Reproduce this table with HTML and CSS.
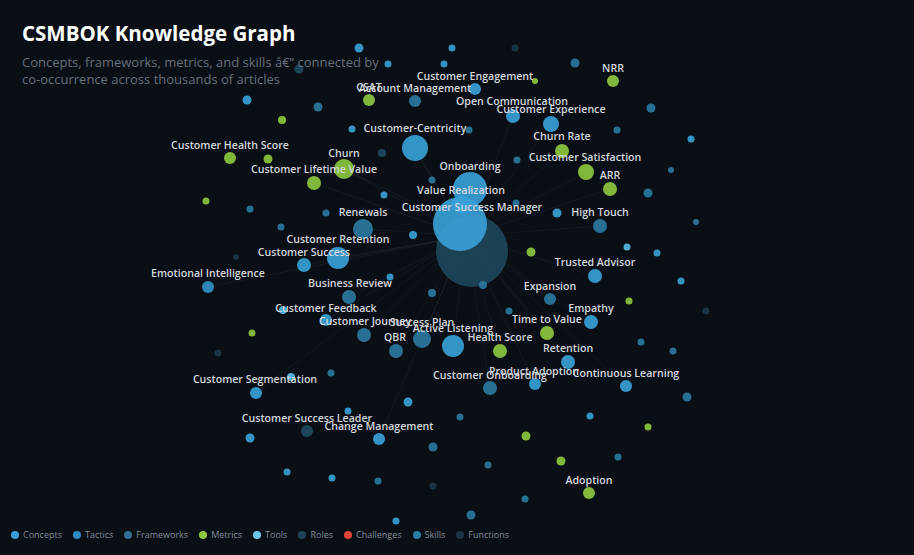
FILE: index.html
```html
<!DOCTYPE html>
<html lang="en">
<head>
<meta charset="utf-8">
<title>CSMBOK Knowledge Graph</title>
<link rel="stylesheet" href="styles.css">
</head>
<body>
<div class="page">
  <svg class="graph" width="914" height="555" viewBox="0 0 914 555" xmlns="http://www.w3.org/2000/svg">
    <g class="edges">
      <line x1="466" y1="236" x2="415" y2="149"/>
      <line x1="466" y1="236" x2="469" y2="189"/>
      <line x1="466" y1="236" x2="363" y2="229"/>
      <line x1="466" y1="236" x2="338" y2="258"/>
      <line x1="466" y1="236" x2="304" y2="265"/>
      <line x1="466" y1="236" x2="349" y2="297"/>
      <line x1="466" y1="236" x2="364" y2="335"/>
      <line x1="466" y1="236" x2="422" y2="339"/>
      <line x1="466" y1="236" x2="453" y2="346"/>
      <line x1="466" y1="236" x2="396" y2="351"/>
      <line x1="466" y1="236" x2="500" y2="351"/>
      <line x1="466" y1="236" x2="547" y2="333"/>
      <line x1="466" y1="236" x2="568" y2="362"/>
      <line x1="466" y1="236" x2="535" y2="384"/>
      <line x1="466" y1="236" x2="490" y2="388"/>
      <line x1="466" y1="236" x2="550" y2="299"/>
      <line x1="466" y1="236" x2="591" y2="322"/>
      <line x1="466" y1="236" x2="595" y2="276"/>
      <line x1="466" y1="236" x2="600" y2="226"/>
      <line x1="466" y1="236" x2="586" y2="172"/>
      <line x1="466" y1="236" x2="562" y2="151"/>
      <line x1="466" y1="236" x2="551" y2="124"/>
      <line x1="466" y1="236" x2="610" y2="189"/>
      <line x1="466" y1="236" x2="344" y2="169"/>
      <line x1="466" y1="236" x2="314" y2="183"/>
      <line x1="466" y1="236" x2="326" y2="320"/>
      <line x1="466" y1="236" x2="625" y2="386"/>
      <line x1="466" y1="236" x2="208" y2="287"/>
      <line x1="466" y1="236" x2="255" y2="393"/>
      <line x1="466" y1="236" x2="379" y2="439"/>
      <line x1="466" y1="236" x2="513" y2="116"/>
      <line x1="415" y1="149" x2="461" y2="226"/>
      <line x1="344" y1="169" x2="461" y2="226"/>
    </g>
    <g class="nodes">
      <circle class="role big" cx="472" cy="251" r="36"/>
      <circle class="concept" cx="461" cy="204" r="9"/>
      <circle class="concept" cx="470" cy="189" r="17"/>
      <circle class="concept" cx="460" cy="224" r="27"/>

      <circle class="metric" cx="613" cy="81" r="6"/>
      <circle class="concept" cx="475" cy="89" r="6"/>
      <circle class="frame" cx="415" cy="101" r="6"/>
      <circle class="metric" cx="369" cy="100" r="6"/>
      <circle class="concept" cx="513" cy="116" r="7"/>
      <circle class="concept" cx="551" cy="124" r="8"/>
      <circle class="concept" cx="415" cy="148" r="13"/>
      <circle class="metric" cx="562" cy="151" r="7"/>
      <circle class="metric" cx="586" cy="172" r="8"/>
      <circle class="metric" cx="610" cy="189" r="7"/>
      <circle class="metric" cx="344" cy="169" r="10"/>
      <circle class="metric" cx="314" cy="183" r="7"/>
      <circle class="metric" cx="230" cy="158" r="6"/>
      <circle class="frame" cx="600" cy="226" r="7"/>
      <circle class="frame" cx="363" cy="229" r="10"/>
      <circle class="concept" cx="338" cy="258" r="11"/>
      <circle class="concept" cx="304" cy="265" r="7"/>
      <circle class="tactic" cx="208" cy="287" r="6"/>
      <circle class="concept" cx="595" cy="276" r="7"/>
      <circle class="frame" cx="349" cy="297" r="7"/>
      <circle class="frame" cx="550" cy="299" r="6"/>
      <circle class="concept" cx="326" cy="320" r="6"/>
      <circle class="concept" cx="591" cy="322" r="7"/>
      <circle class="frame" cx="364" cy="335" r="7"/>
      <circle class="frame" cx="422" cy="339" r="9"/>
      <circle class="concept" cx="453" cy="346" r="11"/>
      <circle class="metric" cx="547" cy="333" r="7"/>
      <circle class="frame" cx="396" cy="351" r="7"/>
      <circle class="metric" cx="500" cy="351" r="7"/>
      <circle class="concept" cx="568" cy="362" r="7"/>
      <circle class="concept" cx="535" cy="384" r="6"/>
      <circle class="frame" cx="490" cy="388" r="7"/>
      <circle class="concept" cx="626" cy="386" r="6"/>
      <circle class="concept" cx="256" cy="393" r="6"/>
      <circle class="role" cx="307" cy="431" r="6"/>
      <circle class="concept" cx="379" cy="439" r="6"/>
      <circle class="metric" cx="589" cy="493" r="6"/>

      <circle class="concept" cx="359" cy="48" r="4.5"/>
      <circle class="concept" cx="452" cy="48" r="3.5"/>
      <circle class="func" cx="515" cy="48" r="3.5"/>
      <circle class="concept" cx="388" cy="64" r="3.5"/>
      <circle class="concept" cx="444" cy="64" r="3.5"/>
      <circle class="frame" cx="575" cy="63" r="4.5"/>
      <circle class="role" cx="299" cy="69" r="4.5"/>
      <circle class="metric" cx="535" cy="81" r="3"/>
      <circle class="concept" cx="247" cy="100" r="4.5"/>
      <circle class="frame" cx="318" cy="107" r="4.5"/>
      <circle class="metric" cx="282" cy="120" r="4"/>
      <circle class="concept" cx="352" cy="129" r="3.5"/>
      <circle class="frame" cx="469" cy="130" r="3.5"/>
      <circle class="frame" cx="617" cy="130" r="3.5"/>
      <circle class="frame" cx="651" cy="108" r="4.5"/>
      <circle class="concept" cx="691" cy="139" r="3.5"/>
      <circle class="role" cx="382" cy="153" r="4"/>
      <circle class="metric" cx="268" cy="159" r="4.5"/>
      <circle class="frame" cx="432" cy="180" r="3.5"/>
      <circle class="frame" cx="517" cy="160" r="3.5"/>
      <circle class="frame" cx="671" cy="170" r="3"/>
      <circle class="frame" cx="648" cy="193" r="4.5"/>
      <circle class="concept" cx="557" cy="213" r="4.5"/>
      <circle class="frame" cx="516" cy="203" r="3.5"/>
      <circle class="frame" cx="696" cy="222" r="3"/>
      <circle class="tool" cx="627" cy="247" r="3.5"/>
      <circle class="concept" cx="657" cy="253" r="3.5"/>
      <circle class="metric" cx="531" cy="252" r="4.5"/>
      <circle class="metric" cx="206" cy="201" r="3.5"/>
      <circle class="frame" cx="250" cy="209" r="3.5"/>
      <circle class="frame" cx="326" cy="213" r="3.5"/>
      <circle class="concept" cx="384" cy="195" r="3.5"/>
      <circle class="frame" cx="281" cy="227" r="3.5"/>
      <circle class="func" cx="236" cy="257" r="3"/>
      <circle class="concept" cx="413" cy="235" r="4"/>
      <circle class="concept" cx="390" cy="277" r="3.5"/>
      <circle class="frame" cx="483" cy="285" r="4"/>
      <circle class="frame" cx="432" cy="293" r="4"/>
      <circle class="frame" cx="509" cy="311" r="3.5"/>
      <circle class="tool" cx="283" cy="310" r="4"/>
      <circle class="metric" cx="252" cy="333" r="3.5"/>
      <circle class="func" cx="218" cy="353" r="3.5"/>
      <circle class="frame" cx="331" cy="373" r="3.5"/>
      <circle class="tool" cx="291" cy="377" r="4"/>
      <circle class="concept" cx="408" cy="402" r="4.5"/>
      <circle class="concept" cx="348" cy="411" r="3.5"/>
      <circle class="frame" cx="460" cy="417" r="3.5"/>
      <circle class="concept" cx="250" cy="438" r="4.5"/>
      <circle class="frame" cx="433" cy="447" r="4.5"/>
      <circle class="metric" cx="526" cy="436" r="4.5"/>
      <circle class="concept" cx="590" cy="416" r="3.5"/>
      <circle class="metric" cx="648" cy="427" r="3.5"/>
      <circle class="frame" cx="488" cy="465" r="3.5"/>
      <circle class="metric" cx="561" cy="461" r="4.5"/>
      <circle class="frame" cx="618" cy="457" r="3.5"/>
      <circle class="concept" cx="287" cy="472" r="3.5"/>
      <circle class="concept" cx="332" cy="478" r="3.5"/>
      <circle class="frame" cx="378" cy="481" r="3.5"/>
      <circle class="func" cx="433" cy="486" r="3.5"/>
      <circle class="frame" cx="525" cy="499" r="3.5"/>
      <circle class="frame" cx="471" cy="515" r="4.5"/>
      <circle class="concept" cx="396" cy="521" r="3.5"/>
      <circle class="concept" cx="681" cy="281" r="3.5"/>
      <circle class="metric" cx="629" cy="301" r="3.5"/>
      <circle class="func" cx="706" cy="311" r="3.5"/>
      <circle class="frame" cx="641" cy="342" r="3.5"/>
      <circle class="frame" cx="673" cy="351" r="3.5"/>
      <circle class="frame" cx="687" cy="397" r="4.5"/>
    </g>
    <g class="labels">
      <text x="613" y="71.5">NRR</text>
      <text x="475" y="79.5">Customer Engagement</text>
      <text x="415" y="91.5">Account Management</text>
      <text x="369" y="90.5">CSAT</text>
      <text x="512" y="104.5">Open Communication</text>
      <text x="551" y="112.5">Customer Experience</text>
      <text x="415" y="131.5">Customer-Centricity</text>
      <text x="562" y="139.5">Churn Rate</text>
      <text x="585" y="160.5">Customer Satisfaction</text>
      <text x="610" y="178.5">ARR</text>
      <text x="344" y="156.5">Churn</text>
      <text x="314" y="172.5">Customer Lifetime Value</text>
      <text x="230" y="148.5">Customer Health Score</text>
      <text x="470" y="169.5">Onboarding</text>
      <text x="461" y="193.5">Value Realization</text>
      <text x="472" y="210.5">Customer Success Manager</text>
      <text x="600" y="215.5">High Touch</text>
      <text x="363" y="216">Renewals</text>
      <text x="338" y="243">Customer Retention</text>
      <text x="304" y="256">Customer Success</text>
      <text x="208" y="276.5">Emotional Intelligence</text>
      <text x="595" y="265.5">Trusted Advisor</text>
      <text x="350" y="287">Business Review</text>
      <text x="550" y="289.5">Expansion</text>
      <text x="326" y="311.5">Customer Feedback</text>
      <text x="591" y="312">Empathy</text>
      <text x="365" y="324.5">Customer Journey</text>
      <text x="422" y="325.5">Success Plan</text>
      <text x="453" y="331.5">Active Listening</text>
      <text x="547" y="322.5">Time to Value</text>
      <text x="395" y="340.5">QBR</text>
      <text x="500" y="340.5">Health Score</text>
      <text x="568" y="351.5">Retention</text>
      <text x="534" y="374.5">Product Adoption</text>
      <text x="490" y="378.5">Customer Onboarding</text>
      <text x="626" y="376.5">Continuous Learning</text>
      <text x="255" y="383">Customer Segmentation</text>
      <text x="307" y="421.5">Customer Success Leader</text>
      <text x="379" y="429.5">Change Management</text>
      <text x="589" y="483.5">Adoption</text>
    </g>
  </svg>

  <header class="header">
    <h1 class="title">CSMBOK Knowledge Graph</h1>
    <p class="subtitle">Concepts, frameworks, metrics, and skills &#226;&#8364;&#8221; connected by<br>co-occurrence across thousands of articles</p>
  </header>

  <ul class="legend">
    <li class="legend-item"><span class="dot d-concept"></span>Concepts</li>
    <li class="legend-item"><span class="dot d-tactic"></span>Tactics</li>
    <li class="legend-item"><span class="dot d-frame"></span>Frameworks</li>
    <li class="legend-item"><span class="dot d-metric"></span>Metrics</li>
    <li class="legend-item"><span class="dot d-tool"></span>Tools</li>
    <li class="legend-item"><span class="dot d-role"></span>Roles</li>
    <li class="legend-item"><span class="dot d-challenge"></span>Challenges</li>
    <li class="legend-item"><span class="dot d-skill"></span>Skills</li>
    <li class="legend-item"><span class="dot d-func"></span>Functions</li>
  </ul>
</div>
</body>
</html>
```
FILE: styles.css
```css
* { box-sizing: border-box; }

html, body {
  margin: 0;
  padding: 0;
  background: #0a0e15;
}

body {
  font-family: "Open Sans", "Noto Sans", sans-serif;
  color: #e8eaee;
}

.page {
  position: relative;
  width: 914px;
  height: 555px;
  overflow: hidden;
  display: flex;
  flex-direction: column;
}

.graph {
  position: absolute;
  left: 0;
  top: 0;
  z-index: 0;
}

.edges line {
  stroke: #8a9bb0;
  stroke-opacity: 0.08;
  stroke-width: 1;
}

.nodes circle { opacity: 0.92; }
.nodes .big { opacity: 0.85; }

.concept { fill: #3a9fd6; }
.tactic { fill: #3190c6; }
.frame { fill: #2b789e; }
.metric { fill: #8cc63f; }
.tool { fill: #55b8e4; }
.role { fill: #1f4a5f; }
.skill { fill: #2c84b0; }
.func { fill: #1c3748; }

.labels text {
  font-family: "Open Sans", "Noto Sans", sans-serif;
  font-size: 10.6px;
  font-weight: 600;
  fill: #d3d7dc;
  text-anchor: middle;
}

.header {
  position: relative;
  z-index: 1;
  padding: 21px 0 0 22px;
}

.title {
  margin: 0;
  font-size: 20.5px;
  line-height: 25px;
  font-weight: 700;
  color: #ffffff;
}

.subtitle {
  margin: 8px 0 0;
  font-size: 13px;
  line-height: 17px;
  color: #676f7a;
}

.legend {
  position: relative;
  z-index: 1;
  margin: auto 0 0;
  padding: 0 0 13px 11px;
  list-style: none;
  display: flex;
  gap: 11px;
}

.legend-item {
  display: flex;
  align-items: center;
  gap: 4px;
  font-size: 9px;
  line-height: 14px;
  color: #828a94;
}

.dot {
  width: 8px;
  height: 8px;
  border-radius: 50%;
  flex: none;
}

.d-concept { background: #3a9fd6; }
.d-tactic { background: #2f8cc2; }
.d-frame { background: #2a6f90; }
.d-metric { background: #8cc63f; }
.d-tool { background: #6cc6ea; }
.d-role { background: #1f4458; }
.d-challenge { background: #e0463a; }
.d-skill { background: #2a7ca5; }
.d-func { background: #1c3445; }
```
